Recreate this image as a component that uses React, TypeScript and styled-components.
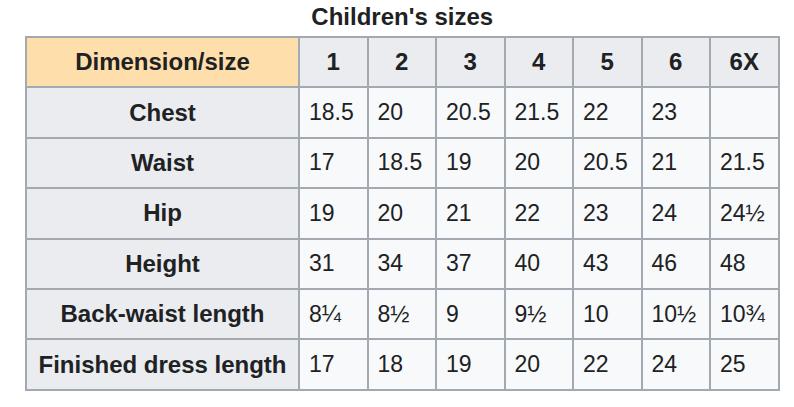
import styled, { createGlobalStyle } from 'styled-components';

const GlobalStyle = createGlobalStyle`
  body {
    margin: 0;
    background: #ffffff;
    font-family: "Liberation Sans", Arial, sans-serif;
    color: #202122;
  }
`;

const Page = styled.div`
  padding: 0 0 0 25px;
`;

const Table = styled.table`
  border-collapse: collapse;
  table-layout: fixed;
  width: 752px;
  background: #f8f9fa;
  border: 2px solid #a2a9b1;
  font-size: 23px;
  color: #202122;
`;

const Caption = styled.caption`
  font-weight: bold;
  font-size: 24px;
  line-height: 27px;
  padding: 3px 0 6px;
  text-align: center;
`;

const Row = styled.tr`
  height: 50.4px;
`;

const HeadCell = styled.th<{ $corner?: boolean }>`
  border: 2px solid #a2a9b1;
  background: ${(p) => (p.$corner ? '#fedfab' : '#eaecf0')};
  font-weight: bold;
  font-size: 24px;
  text-align: center;
  padding: 0 6px;
  white-space: nowrap;
`;

const Cell = styled.td`
  border: 2px solid #a2a9b1;
  padding: 0 6px 0 9px;
  text-align: left;
  white-space: nowrap;
`;

const sizes = ['1', '2', '3', '4', '5', '6', '6X'];

const rows: { label: string; values: string[] }[] = [
  { label: 'Chest', values: ['18.5', '20', '20.5', '21.5', '22', '23', ''] },
  { label: 'Waist', values: ['17', '18.5', '19', '20', '20.5', '21', '21.5'] },
  { label: 'Hip', values: ['19', '20', '21', '22', '23', '24', '24½'] },
  { label: 'Height', values: ['31', '34', '37', '40', '43', '46', '48'] },
  { label: 'Back-waist length', values: ['8¼', '8½', '9', '9½', '10', '10½', '10¾'] },
  { label: 'Finished dress length', values: ['17', '18', '19', '20', '22', '24', '25'] },
];

export default function App() {
  return (
    <Page>
      <GlobalStyle />
      <Table>
        <Caption>Children's sizes</Caption>
        <colgroup>
          <col style={{ width: 273 }} />
          {sizes.map((s) => (
            <col key={s} style={{ width: 68.5 }} />
          ))}
        </colgroup>
        <thead>
          <Row>
            <HeadCell $corner>Dimension/size</HeadCell>
            {sizes.map((s) => (
              <HeadCell key={s}>{s}</HeadCell>
            ))}
          </Row>
        </thead>
        <tbody>
          {rows.map((r) => (
            <Row key={r.label}>
              <HeadCell>{r.label}</HeadCell>
              {r.values.map((v, i) => (
                <Cell key={i}>{v}</Cell>
              ))}
            </Row>
          ))}
        </tbody>
      </Table>
    </Page>
  );
}
